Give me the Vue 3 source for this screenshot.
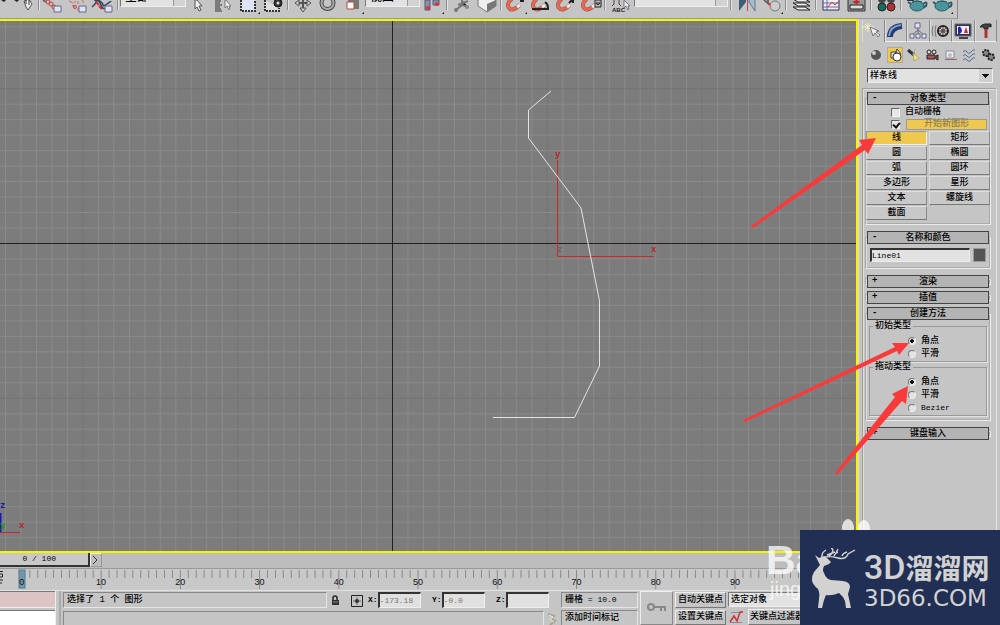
<script setup>
import { ref } from 'vue'

const step = 15.48
const columns = Array.from({ length: 160 }, (_, i) => i - 25).map(i => ({ x: 392.5 + i * step, major: i % 10 === 0 }))
const rows = Array.from({ length: 120 }, (_, i) => i - 14).map(i => ({ y: 222.5 + i * step, major: i % 10 === 0 }))
const ticks = Array.from({ length: 105 }, (_, i) => ({ n: i, x: (2.55 + i * 0.9235).toFixed(3) + '%' }))

const shapes = ['线', '矩形', '圆', '椭圆', '弧', '圆环', '多边形', '星形', '文本', '螺旋线', '截面']
const activeShape = ref('线')
const autoGrid = ref(false)
const startNew = ref(true)
const objectName = ref('Line01')
const initial = ref('corner')
const drag = ref('corner')
</script>

<template>
  <div class="app">
    <header class="toolbar">
      <button class="tb wide" aria-label="撤销"><svg width="37" height="17"><path d="M1 0h5l-2 2zM14 0h5l-2 2z" fill="#222"/><path d="M24 1l2 6 2 3 4-6-3-5z" fill="#eee" stroke="#555"/><path d="M26 4v-4M29 5v-5" stroke="#333"/></svg></button>
      <i class="sep"></i>
      <button class="tb" aria-label="链接"><svg width="25" height="17"><path d="M2 0l3 2" stroke="#666" stroke-width="2"/><circle cx="7" cy="2" r="2" class="rl"/><circle cx="10" cy="4" r="2" class="rl"/><circle cx="13" cy="7" r="2" class="rl"/><path d="M13 6h7v6h-7z" class="box"/></svg></button>
      <button class="tb" aria-label="取消链接"><svg width="25" height="17"><path d="M3 1l4 2M6 6l2-1M9 1v2M12 1v3M16 0l2 3M12 8v3" stroke="#c66"/><circle cx="9" cy="7" r="1.5" class="rl"/><path d="M13 6h7v6h-7z" class="box"/></svg></button>
      <button class="tb" aria-label="绑定"><svg width="25" height="17"><path d="M1 7q3-2 4-5t4-1 3 4 4-1 4-2M3 0q6 0 7 5t6 3" fill="none" stroke="#346" stroke-width="1.5"/><path d="M5 2l3 3M8 6l3 3" stroke="#c33" stroke-width="2"/><path d="M14 6h7v6h-7z" class="box"/></svg></button>
      <i class="sep"></i>
      <select class="combo filter" aria-label="选择过滤器"><option>全部</option></select>
      <button class="tb" aria-label="选择对象"><svg width="25" height="17"><path d="M9 0v9l2-2 2 4 2-1-2-4h3l-5-6z" fill="#eee" stroke="#555"/></svg></button>
      <button class="tb" aria-label="按名称选择"><svg width="25" height="17"><path d="M4 1h6M4 3h5M4 5h7M4 7h5M4 9h6M4 11h7" stroke="#333"/><path d="M14 0v8l2-2 2 4 1-1-1-3h2l-5-6z" fill="#eee" stroke="#777"/></svg></button>
      <button class="tb" aria-label="选择区域"><svg width="25" height="17"><path d="M5 0v11h14V0" fill="#dfe3f3" stroke="#333" stroke-width="2" stroke-dasharray="2 1"/><path d="M24 14v-2l-2 2z" fill="#111"/></svg></button>
      <button class="tb" aria-label="窗口/交叉"><svg width="25" height="17"><path d="M4 0v11h14V8" fill="#ddd" stroke="#333" stroke-width="2" stroke-dasharray="2 1"/><circle cx="17" cy="3" r="4" fill="#333" stroke="#111"/><circle cx="17" cy="3" r="1.5" fill="#ddd"/></svg></button>
      <i class="sep"></i>
      <button class="tb" aria-label="移动"><svg width="25" height="17"><path d="M13 0v10M5 3h16" stroke="#555" stroke-width="2"/><path d="M9 0v6l-4-3zM17 0v6l4-3zM10 8h6l-3 4z" fill="#ccc" stroke="#555"/></svg></button>
      <button class="tb" aria-label="旋转"><svg width="25" height="17"><circle cx="12.500" cy="3" r="6" fill="none" stroke="#444" stroke-width="4"/><circle cx="12.500" cy="3" r="6" fill="none" stroke="#aaa" stroke-width="2"/></svg></button>
      <button class="tb" aria-label="缩放"><svg width="25" height="17"><path d="M8 0h11v9H8z" fill="#777"/><path d="M7 2h7v7H7z" fill="#fff" stroke="#b43"/><path d="M24 14v-2l-2 2z" fill="#111"/></svg></button>
      <select class="combo coord" aria-label="参考坐标系"><option>视图</option></select>
      <button class="tb" aria-label="轴点中心"><svg width="25" height="17"><path d="M5 0h5v10H5zM13 0h6v5h-6z" fill="#8890b0" stroke="#557"/><circle cx="8" cy="8" r="2" fill="#d33"/><circle cx="17" cy="4" r="2" fill="#d33"/><path d="M24 14v-2l-2 2z" fill="#111"/></svg></button>
      <i class="sep"></i>
      <button class="tb" aria-label="操纵"><svg width="25" height="17"><path d="M7 10l6-5M13 0v5l6 2M9 5l10-4" stroke="#777" stroke-width="2"/><circle cx="7" cy="10" r="2" fill="#777"/><circle cx="18" cy="7" r="2" fill="#888"/></svg></button>
      <button class="tb" aria-label="键盘覆盖"><svg width="25" height="17"><path d="M4 0l9-5 9 5v6l-9 6-9-6z" fill="#eee" stroke="#777"/><path d="M13 4l9-4v6l-9 6z" fill="#777"/></svg></button>
      <i class="sep"></i>
      <button v-for="n in 4" :key="n" class="tb" aria-label="捕捉"><svg width="25" height="17"><path d="M10-3L6 2Q4 5 6 8t7 0l4-3" fill="none" stroke="#8d5550" stroke-width="4"/><path d="M10-3L6 2Q4 5 6 8t7 0l4-3" fill="none" stroke="#e8674f" stroke-width="3"/><path d="M14 7l3-2" stroke="#eee" stroke-width="3"/><path v-if="n === 1" d="M17 0h4v2h-4zM24 14v-2l-2 2z" fill="#222"/><path v-if="n === 2" d="M4 9h17M17 2q3 2 3 6" fill="none" stroke="#222" stroke-width="2"/><path v-if="n === 3" d="M16 3l4-4M20 0v3" stroke="#222" stroke-width="2"/><path v-if="n === 4" d="M17 0h6v7h-6zM18 3h4l-2 2z" fill="#bbb" stroke="#222"/></svg></button>
      <i class="sep"></i>
      <button class="tb" aria-label="命名选择集"><svg width="25" height="17"><path d="M7 0v4l-2 2M12 0v4l2 2" stroke="#444" fill="none"/><path d="M17 0v8l2-2 2 4 1-1-1-3h2z" fill="#eee" stroke="#777"/><text x="5" y="12" class="abc">ABC</text></svg></button>
      <select class="combo named" aria-label="命名选择"><option></option></select>
      <i class="sep"></i>
      <button class="tb" aria-label="镜像"><svg width="25" height="17"><path d="M5-8v19l7-9v-10z" fill="#3c5f78"/><path d="M21-8v19l-6-9v-10z" fill="#a3bccb" stroke="#678"/><path d="M13.500 0v11" stroke="#c44"/></svg></button>
      <button class="tb" aria-label="对齐"><svg width="25" height="17"><path d="M5 0l5 4M9-1v4" stroke="#666" stroke-width="2"/><circle cx="16" cy="6" r="5" fill="#ccc" stroke="#777"/><path d="M9 3l2 2" stroke="#c33" stroke-width="2"/><path d="M24 14v-2l-2 2z" fill="#111"/></svg></button>
      <i class="sep"></i>
      <button class="tb" aria-label="层"><svg width="25" height="17"><path d="M4-1h12l5 3H9zM4 3h12l5 3H9zM4 7h12l5 3H9z" fill="#eee" stroke="#222"/></svg></button>
      <i class="sep"></i>
      <button class="tb" aria-label="曲线编辑器"><svg width="25" height="17"><path d="M4-1h16v11H4z" fill="#eee" stroke="#336"/><path d="M8 0v10M4 3h16M4 7h16" stroke="#66a"/><path d="M9 7l4-5 3 3 4-4" fill="none" stroke="#d33"/></svg></button>
      <button class="tb" aria-label="图解视图"><svg width="25" height="17"><path d="M4-1h17v12H4z" fill="#999" stroke="#333"/><path d="M6 5h13v4H6z" fill="#ddd" stroke="#222"/><path d="M12.500 0v4m-3-2h6" stroke="#c22" stroke-width="2"/></svg></button>
      <i class="sep"></i>
      <button class="tb" aria-label="材质编辑器"><svg width="25" height="17"><circle cx="8" cy="-1" r="4" fill="#444"/><circle cx="17" cy="-1" r="4" fill="#444"/><circle cx="8" cy="7" r="4" fill="#196b5d" stroke="#222"/><circle cx="17" cy="7" r="4" fill="#b22f35" stroke="#222"/></svg></button>
      <i class="sep"></i>
      <button v-for="n in 2" :key="'t' + n" class="tb" aria-label="渲染"><svg width="25" height="17"><path d="M7 4L4 2M19 4q5-4 3 2l-4 2" fill="none" stroke="#255d66" stroke-width="2"/><ellipse cx="13" cy="6" rx="7" ry="5" fill="#4b949b" stroke="#255d66"/><path d="M8 2q5-2 10 0" stroke="#255d66" fill="none"/><path v-if="n === 1" d="M3 0h7" stroke="#333" stroke-width="2"/><path v-if="n === 2" d="M24 14v-2l-2 2z" fill="#111"/></svg></button>
    </header>

    <main class="work">
      <section class="left">
        <div class="viewport">
          <svg class="scene">
            <line v-for="c in columns" :key="'c' + c.x" :x1="c.x" :x2="c.x" y1="0" y2="100%" :class="{ major: c.major }" class="grid" />
            <line v-for="r in rows" :key="'r' + r.y" :y1="r.y" :y2="r.y" x1="0" x2="100%" :class="{ major: r.major }" class="grid" />
            <path d="M392.500 0v3000M0 222.500h5000" class="axis" />
            <path d="M557.500 139v96.500h96" class="red" />
            <text x="555" y="136" class="lab r">y</text>
            <text x="651" y="231" class="lab r">x</text>
            <text x="557" y="231" class="lab g">z</text>
            <polyline points="551,70 528.5,89 528.5,117 581,187 599.5,280 599.5,345 574.5,396.500 493,396.500" class="spline" />
            <path d="M0 511.500h20" class="red" />
            <path d="M.5 492v19" class="blue" />
            <text x="0" y="487" class="lab b">z</text>
            <text x="0" y="507" class="lab gr">y</text>
            <text x="19" y="507" class="lab r">x</text>
          </svg>
        </div>
        <div class="slider">
          <button class="thumb">0 / 100</button><button class="next" aria-label="下一帧"><svg width="9" height="10"><path d="M2 1l4 4-4 4" fill="none" stroke="#333"/></svg></button>
        </div>
        <div class="ruler">
          <svg class="ticks">
            <path d="M0 2.500h3M0 5h2.500v3H0M0 11h3M0 14h2" stroke="#222" fill="none"/>
            <rect x="19" y="1" width="6" height="18" fill="#6f9ab2" stroke="#4d7890"/>
            <template v-for="t in ticks" :key="t.n">
              <line :x1="t.x" :x2="t.x" y1="1" :y2="t.n % 10 ? 9 : 20" class="tick" />
              <text v-if="t.n % 10 === 0" :x="t.x" y="16" class="num">{{ t.n }}</text>
            </template>
          </svg>
        </div>
      </section>

      <aside class="panel">
        <nav class="tabs">
          <button class="tab on" aria-label="创建"><svg width="20" height="18"><path d="M5 1v9M0 5h11M2 2l6 6M8 2L2 8" stroke="#f6edc0"/><path d="M7 5l3 9 2-3 3 4 2-2-4-3 3-1z" fill="#eee" stroke="#777"/></svg></button>
          <button class="tab" aria-label="修改"><svg width="20" height="18"><path d="M4 15Q4 5 16 4" fill="none" stroke="#233b70" stroke-width="6"/><path d="M3 14Q4 4 15 3" fill="none" stroke="#7e9dd0" stroke-width="2"/></svg></button>
          <button class="tab" aria-label="层次"><svg width="20" height="18"><path d="M10 4v4M10 8L4 13M10 8v5M10 8l6 5" stroke="#667"/><path d="M7 1h5v5H7zM2 12h4v4H2zM8 12h4v4H8zM14 12h4v4h-4z" class="box"/></svg></button>
          <button class="tab" aria-label="运动"><svg width="20" height="18"><path d="M2 4q-2 5 0 10M5 3q-2 6 0 12" fill="none" stroke="#777"/><circle cx="12" cy="9" r="5" fill="#ccc" stroke="#222" stroke-width="2"/><circle cx="12" cy="9" r="2" fill="#b33"/><path d="M12 5v8M8 9h8M9 6l6 6M15 6l-6 6" stroke="#555"/></svg></button>
          <button class="tab" aria-label="显示"><svg width="20" height="18"><path d="M2 2h16v12H2z" fill="#334" stroke="#667"/><path d="M4 4h12v8H4z" fill="#eef"/><path d="M6 5v6q4-2 0-6" fill="none" stroke="#22b" stroke-width="2"/><path d="M11 11l2-6 2 6z" fill="#d22"/><path d="M6 16h9" stroke="#444" stroke-width="2"/></svg></button>
          <button class="tab" aria-label="工具"><svg width="20" height="18"><path d="M4 5q2-3 5-3h6v3l-3-1v3H8V5z" fill="#444" stroke="#222"/><path d="M10 7v9" stroke="#a5382f" stroke-width="3"/></svg></button>
        </nav>
        <div class="cats">
          <button class="cat" aria-label="几何体"><svg width="15" height="14"><circle cx="8" cy="7" r="5" fill="#555"/><circle cx="6" cy="5" r="2" fill="#ccc"/></svg></button>
          <button class="cat on" aria-label="图形"><svg width="15" height="14"><path d="M3 4h6v6H3zM9 1l4 5H7z" fill="#ddd" stroke="#444"/><circle cx="9" cy="9" r="4" fill="#fff" stroke="#333"/></svg></button>
          <button class="cat" aria-label="灯光"><svg width="15" height="14"><path d="M2 2l6 5" stroke="#333" stroke-width="3"/><path d="M7 5l6 5-5 3zM9 1l-1 4" fill="#f1e378" stroke="#aaa777"/></svg></button>
          <button class="cat" aria-label="摄影机"><svg width="15" height="14"><circle cx="5" cy="4" r="2" fill="#ddd" stroke="#222"/><circle cx="10" cy="4" r="2" fill="#ddd" stroke="#222"/><path d="M3 7h8v4H3zM12 8l2-1v5l-2-1z" fill="#a55" stroke="#222"/></svg></button>
          <button class="cat" aria-label="辅助对象"><svg width="15" height="14"><path d="M3 3h8v7H3z" fill="#eee" stroke="#889"/><circle cx="7" cy="7" r="2" fill="#bbb"/><path d="M2 11.500h12" stroke="#966"/></svg></button>
          <button class="cat" aria-label="空间扭曲"><svg width="15" height="14"><path d="M1 4q2-3 4 0t4 0 4-2M1 8q2-3 4 0t4 0 4-2M1 12q2-3 4 0t4 0 4-2" fill="none" stroke="#556e9c"/></svg></button>
          <button class="cat" aria-label="系统"><svg width="15" height="14"><circle cx="5" cy="5" r="3" fill="#888" stroke="#222" stroke-width="2" stroke-dasharray="2 1"/><circle cx="10" cy="9" r="3" fill="#888" stroke="#222" stroke-width="2" stroke-dasharray="2 1"/></svg></button>
        </div>
        <select class="combo kind" aria-label="图形类别"><option>样条线</option></select>

        <div class="pane">
          <section class="rollout">
            <button class="head"><b>-</b>对象类型</button>
            <label class="check auto"><input v-model="autoGrid" type="checkbox" />自动栅格</label>
            <div class="check"><input v-model="startNew" type="checkbox" aria-label="开始新图形" /><button class="start">开始新图形</button></div>
            <div class="shapes">
              <button v-for="s in shapes" :key="s" :class="{ on: s === activeShape }" @click="activeShape = s">{{ s }}</button>
            </div>
          </section>
          <section class="rollout">
            <button class="head"><b>-</b>名称和颜色</button>
            <div class="name"><input v-model="objectName" type="text" aria-label="名称" /><button class="swatch" aria-label="颜色"></button></div>
          </section>
          <section class="rollout shut"><button class="head"><b>+</b>渲染</button></section>
          <section class="rollout shut"><button class="head"><b>+</b>插值</button></section>
          <section class="rollout methods">
            <button class="head"><b>-</b>创建方法</button>
            <fieldset>
              <legend>初始类型</legend>
              <label><input v-model="initial" type="radio" value="corner" name="initial" />角点</label>
              <label><input v-model="initial" type="radio" value="smooth" name="initial" />平滑</label>
            </fieldset>
            <fieldset>
              <legend>拖动类型</legend>
              <label><input v-model="drag" type="radio" value="corner" name="drag" />角点</label>
              <label><input v-model="drag" type="radio" value="smooth" name="drag" />平滑</label>
              <label><input v-model="drag" type="radio" value="bezier" name="drag" /><span class="mono">Bezier</span></label>
            </fieldset>
          </section>
          <section class="rollout shut"><button class="head"><b>+</b>键盘输入</button></section>
        </div>
      </aside>
    </main>

    <footer class="status">
      <div class="script"><div class="pink"></div><div class="white"></div></div>
      <div class="info">
        <div class="line">
          <output class="well prompt">选择了 1 个 图形</output>
          <button class="mini" aria-label="锁定"><svg width="20" height="15"><path d="M6 7V5q0-2 2-2t2 2v2" fill="none" stroke="#222" stroke-width="1.500"/><path d="M5 7h7v5H5z" fill="#333"/><path d="M6 9h5" stroke="#888"/></svg></button>
          <button class="mini" aria-label="绝对模式"><svg width="20" height="15"><path d="M4.500 2.500h11v11h-11z" fill="none" stroke="#222"/><path d="M10 4v8M6 8h8" stroke="#666"/><circle cx="10" cy="8" r="2" fill="#333"/></svg></button>
          <label class="coordf">X:<input type="text" value="-173.18" /></label>
          <label class="coordf">Y:<input type="text" value="-0.0" /></label>
          <label class="coordf">Z:<input type="text" value="" /></label>
        </div>
        <div class="line">
          <output class="well hint"></output>
          <button class="mini" aria-label="通信中心"><svg width="15" height="15"><path d="M4 2l6 2-3 3 4 2-5 4" fill="none" stroke="#aaa58a" stroke-width="2"/><path d="M5 3l4 2-3 2 4 3" fill="none" stroke="#eee"/></svg></button>
        </div>
      </div>
      <div class="stack marks"><output class="well">栅格<span class="mono"> = 10.0</span></output><button class="well">添加时间标记</button></div>
      <button class="key" aria-label="设置关键点"><svg width="22" height="14"><circle cx="5" cy="6" r="3" fill="none" stroke="#888" stroke-width="2"/><path d="M8 6h12M15 6v4M19 6v4" stroke="#888" stroke-width="2"/></svg></button>
      <div class="stack keys"><button>自动关键点</button><button>设置关键点</button></div>
      <div class="stack last">
        <select class="combo sel" aria-label="关键点集"><option>选定对象</option></select>
        <div class="filters"><button class="mini" aria-label="切线"><svg width="18" height="15"><path d="M3 2.500h12M2 12.500h12" stroke="#88a"/><path d="M2 12l4-6 3 5 3-9h3" fill="none" stroke="#c33" stroke-width="1.500"/></svg></button><button class="kf">关键点过滤器</button></div>
      </div>
    </footer>

    <svg class="overlay" width="1000" height="625" aria-hidden="true">
      <g fill="#f83b3a">
        <path d="M751 226L862 145 859 140 876 138 868 154 865 150 753 228z"/>
        <path d="M743 420L895 347 892 343 909 343 899 355 897 351 745 422z"/>
        <path d="M835 473L895 397 892 394 908 386 906 404 902 401 837 475z"/>
      </g>
      <g fill="#fff" fill-opacity=".75">
        <ellipse cx="848" cy="528" rx="6" ry="9"/><ellipse cx="864" cy="529" rx="6" ry="9"/>
        <text x="766" y="574" class="wm-big">Ba</text>
        <text x="770" y="596" class="wm-small">jing</text>
      </g>
    </svg>

    <div class="brand">
      <svg class="deer" width="44" height="60" viewBox="0 0 44 60">
        <path d="M3 7l4 3 5-2 3 2 4 4-2 2-5 2q-2 4 0 7 2 6 7 7l12 1q7 1 7 6-1 4-2 7l3 14h-5l-1-7q-2-5-6-8-7 3-13 2l-2 5-2 8H6l1-9q1-6-1-10-6-5-6-9 0-5 2-8l6-7z" fill="#d2d2d0"/>
        <path d="M10 10Q9 5 14 2M12 9Q18 9 20 5T19 0M15 7l8-3M13 9Q18 8 26 10T36 6L43 2M22 8q1-3 4-4M30 8q1-3 5-4M24 5l2-4" fill="none" stroke="#d2d2d0" stroke-width="1.400"/>
      </svg>
      <div class="words"><div class="top"><span>3D</span>溜溜网</div><div class="bot">3D66.COM</div></div>
    </div>
  </div>
</template>

<style>
html, body { margin: 0; height: 100%; background: #c5c5c5; }
#app { height: 100%; }
</style>

<style scoped>
.app { position: relative; display: flex; flex-direction: column; height: 100vh; overflow: hidden; background: #c5c5c5; color: #000; font: 500 9px/12px "Liberation Mono", "Noto Sans CJK SC", monospace; }
.app * { box-sizing: border-box; }
button, select, input { font: inherit; color: inherit; margin: 0; padding: 0; border: 0; background: none; border-radius: 0; appearance: none; }
button { white-space: nowrap; }
svg { display: block; }
.mono { font-size: 8px; white-space: pre; }

.toolbar { display: flex; align-items: flex-start; align-self: flex-start; height: 19px; border-right: 1px solid #888; border-bottom: 1px solid #999; padding-right: 3px; flex: none; }
.tb { width: 25px; height: 17px; flex: none; overflow: hidden; }
.tb.wide { width: 37px; }
.sep { width: 4px; height: 10px; flex: none; border-left: 1px solid #8c8c8c; box-shadow: inset 1px 0 #e4e4e4; margin-left: 1px; margin-right: -1px; }
.named ~ .sep { margin-right: 0; }
.rl { fill: none; stroke: #c0403a; }
.box { fill: #dfe2f4; stroke: #668; }
.abc { font: bold 6px "Liberation Sans", sans-serif; fill: #222; }
.combo { border: 1px solid #777; border-right-color: #eee; border-bottom-color: #eee; }
.toolbar .combo { height: 18px; margin-top: -11px; padding: 0 4px; flex: none; font-size: 12px; line-height: 16px; background: linear-gradient(90deg, #999 1px, #d2d2d2 1px) right / 12px 100% no-repeat #e2e2e2; }
.toolbar .filter { width: 66px; }
.toolbar .coord { width: 55px; }
.toolbar .named { width: 94px; margin-left: 2px; margin-right: 1px; }

.work { flex: 1; display: flex; min-height: 0; }
.left { flex: 1; min-width: 0; display: flex; flex-direction: column; }
.viewport { flex: 1; min-height: 0; border: 2px solid #f8f500; border-left: 0; background: #7c7c7c; overflow: hidden; }
.scene { width: 100%; height: 100%; }
.grid { stroke: #8b8b8b; stroke-width: 1; }
.grid.major { stroke: #747474; }
.axis { stroke: #202020; fill: none; }
.red { stroke: #c42c2c; fill: none; }
.blue { stroke: #1818b8; stroke-width: 2; }
.spline { fill: none; stroke: #e4e4e4; }
.lab { font: bold 9px "Liberation Mono", monospace; }
.r { fill: #c42020; }
.g { fill: #666; }
.b { fill: #1717b5; }
.gr { fill: #119911; }

.slider { display: flex; height: 15px; background: #bdbdbd; padding-bottom: 1px; flex: none; }
.thumb { width: 90px; font-size: 8px; background: #c8c8c8; border: solid #333; border-width: 0 2px 2px 0; white-space: pre; text-align: right; padding-right: 32px; }
.next { width: 12px; border: 1px solid #999; border-left-color: #eee; border-top-color: #eee; }
.ruler { height: 22px; flex: none; background: #c8c8c8; border-top: 1px solid #999; }
.ticks { width: 100%; height: 21px; }
.tick { stroke: #858b8b; }
.num { font: 9px "Liberation Sans", sans-serif; text-anchor: middle; fill: #111; }

.panel { width: 142px; flex: none; display: flex; flex-direction: column; padding: 1px 3px 0 3px; border-left: 1px solid #ddd; }
.tabs { display: grid; grid-template-columns: repeat(6, 1fr); height: 22px; flex: none; }
.tab { border-right: 1px solid #888; border-bottom: 1px solid #eee; border-left: 1px solid #ddd; display: flex; align-items: center; justify-content: center; }
.tab.on { border-bottom: 0; }
.cats { display: flex; justify-content: space-between; margin: 5px 0 5px 6px; height: 16px; flex: none; }
.cat { width: 16px; height: 16px; }
.cat.on { background: #efc84f; border: 1px solid #aaa; }
.kind { height: 15px; width: auto; margin: 0 4px 0 5px; padding: 0 2px; flex: none; border: 1px solid #555; border-bottom-color: #eee; border-right-color: #eee; background: linear-gradient(#111, #111) right 3px top 5px / 7px 1px no-repeat, linear-gradient(#111, #111) right 4px top 6px / 5px 1px no-repeat, linear-gradient(#111, #111) right 5px top 7px / 3px 1px no-repeat, linear-gradient(#111, #111) right 6px top 8px / 1px 1px no-repeat, linear-gradient(#cfcfcf, #cfcfcf) right / 13px 100% no-repeat, #e2e2e2; }
.pane { flex: 1; min-height: 0; margin-top: 5px; padding: 9px 5px 0 2px; border: 1px solid #a0a0a0; border-bottom: 0; border-right-color: #e6e6e6; box-shadow: inset 1px 1px #ddd; }
.rollout { display: flex; flex-direction: column; border: 1px solid #aaa; border-right-color: #ececec; border-bottom-color: #ececec; box-shadow: inset 1px 1px #ddd, inset -1px -1px #aaa; padding-bottom: 4px; margin-top: 12px; }
.rollout:first-child { margin-top: 0; }
.rollout.shut { height: 7px; margin-top: 9px; padding: 0; }
.head { position: relative; height: 13px; margin: -7px 1px 0; flex: none; background: #b4b4b4; border: 1px solid #444; line-height: 10px; text-align: center; }
.shut .head { margin-top: -4px; }
.methods .head { margin-bottom: 1px; }
.head b { position: absolute; left: 4px; top: 0; }
.check { display: flex; align-items: center; height: 12px; padding-left: 25px; gap: 6px; padding-right: 3px; }
.auto { margin-top: 1px; gap: 5px; }
input[type=checkbox] { width: 9px; height: 9px; flex: none; background: #e6e6e6; border: 1px solid #666; border-right-color: #f4f4f4; border-bottom-color: #f4f4f4; position: relative; }
input[type=checkbox]:checked::after { content: ""; position: absolute; left: 2px; top: 0; width: 3px; height: 5px; border: solid #111; border-width: 0 2px 2px 0; transform: rotate(40deg); }
.start { flex: 1; height: 11px; background: #efc84f; border: 1px solid #999; line-height: 9px; color: #8a7f60; }
.shapes { display: grid; grid-template-columns: 1fr 1fr; gap: 1px 2px; margin-top: 1px; }
.shapes button { height: 14px; line-height: 12px; border: 1px solid #ddd; border-right-color: #888; border-bottom-color: #777; background: #c8c8c8; }
.shapes button.on { background: #efc84f; border-color: #999 #eee #eee #999; }
.name { display: flex; gap: 3px; margin: 4px 4px 2px; height: 14px; }
.name input { flex: 1; min-width: 0; font-size: 8px; background: #e2e2e2; border: 1px solid #333; border-width: 2px 1px 1px 2px; border-right-color: #eee; border-bottom-color: #eee; }
.swatch { width: 13px; background: #555; border: 1px solid #999; }
fieldset { margin: 0 3px; padding: 3px 0 1px 38px; border: 1px solid #999; box-shadow: 1px 1px #e2e2e2; min-width: 0; }
legend { line-height: 10px; padding: 0 2px; margin-left: -35px; }
fieldset label { display: flex; align-items: center; height: 13px; gap: 5px; }
input[type=radio] { width: 8px; height: 8px; border-radius: 50%; background: #e4e4e4; border: 1px solid #777; border-right-color: #eee; border-bottom-color: #eee; }
input[type=radio]:checked { background: radial-gradient(circle, #111 2px, #e4e4e4 2px); }

.status { flex: none; display: flex; height: 35px; border-top: 1px solid #e2e2e2; gap: 2px; }
.script { width: 56px; display: flex; flex-direction: column; gap: 2px; border-right: 1px solid #eee; }
.pink { height: 17px; background: #dcc3c4; border-top: 1px solid #777; border-bottom: 1px solid #eee; }
.white { flex: 1; background: #fff; border-top: 1px solid #777; }
.info { flex: 1; display: flex; flex-direction: column; gap: 2px; border-left: 2px solid #aaa; margin-left: 1px; padding-left: 2px; min-width: 0; }
.line { display: flex; height: 17px; padding-top: 1px; align-items: center; }
.well { display: block; height: 16px; line-height: 14px; border: 1px solid #888; border-right-color: #e6e6e6; border-bottom-color: #e6e6e6; padding: 0 3px; text-align: left; white-space: pre; }
.prompt, .hint { flex: 1; }
.mini { flex: none; }
.coordf { display: flex; align-items: center; width: 64px; padding-left: 1px; flex: none; font-size: 8px; font-weight: bold; }
.coordf input { flex: 1; min-width: 0; height: 16px; margin-right: 10px; font-weight: normal; color: #777; background: #e0e0e0; border: 2px solid #333; border-width: 2px 1px 1px 2px; border-right-color: #eee; border-bottom-color: #eee; }
.stack { display: flex; flex-direction: column; gap: 2px; padding-top: 1px; }
.stack.marks { width: 77px; }
.key { width: 33px; border: 1px solid #eee; border-right-color: #888; border-bottom-color: #888; display: flex; align-items: center; justify-content: center; }
.keys { width: 51px; }
.keys button { height: 16px; border: 1px solid #eee; border-right-color: #777; border-bottom-color: #777; }
.last { width: 272px; }
.sel { height: 16px; padding: 0 2px; background: #e2e2e2; }
.filters { display: flex; gap: 2px; }
.kf { height: 16px; width: 70px; text-align: left; padding-left: 1px; border: 1px solid #eee; border-right-color: #777; border-bottom-color: #777; }

.overlay { position: absolute; left: 0; top: 0; pointer-events: none; }
.wm-big { font: bold 41px "Liberation Sans", sans-serif; }
.wm-small { font: 20px "Liberation Sans", sans-serif; }
.brand { position: absolute; right: 0; bottom: 0; display: flex; padding: 18px 10px 0 12px; gap: 8px; width: 200px; height: 95px; background: #222f55; color: #d2d2d0; }
.deer { flex: none; }
.words { display: flex; flex-direction: column; white-space: nowrap; }
.top { display: flex; align-items: center; height: 38px; font: bold 28px/38px "Noto Sans CJK SC", sans-serif; }
.top span { font: 500 34px/38px Roboto, sans-serif; }
.bot { font: 23px/26px "DejaVu Sans", sans-serif; margin-top: -1px; }
</style>
